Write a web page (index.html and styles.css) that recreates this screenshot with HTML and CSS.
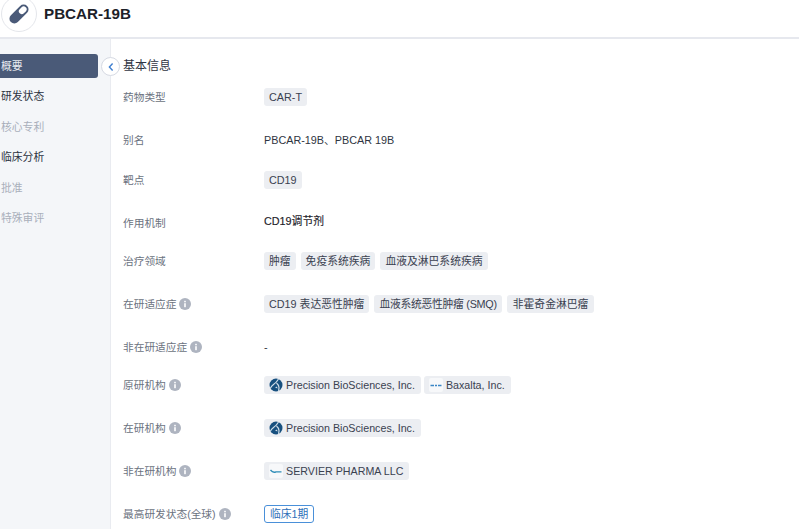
FILE: index.html
```html
<!DOCTYPE html>
<html lang="zh">
<head>
<meta charset="utf-8">
<title>PBCAR-19B</title>
<link rel="stylesheet" href="styles.css">
</head>
<body>
<svg class="defs" width="0" height="0" aria-hidden="true">
  <symbol id="info" viewBox="0 0 12 12">
    <circle cx="6" cy="6" r="6" fill="#aeb4c0"/>
    <rect x="5.2" y="5.2" width="1.6" height="4" fill="#fff"/>
    <rect x="5.2" y="2.8" width="1.6" height="1.5" fill="#fff"/>
  </symbol>
  <symbol id="prec" viewBox="0 0 14 14">
    <circle cx="7" cy="7" r="6.5" fill="#17507f"/>
    <path d="M9.5 1 Q7.5 4.5 4.5 6.5 Q2.5 8 1.5 10 M7.5 5 Q9.5 6.5 10 9.5 Q10 11 9.5 13" stroke="#cfdde8" stroke-width="1.2" fill="none"/>
    <path d="M6 9.5 L8 8.5 L8.5 10.5 Z" fill="#cfdde8"/>
  </symbol>
</svg>
<header class="topbar">
  <div class="logo">
    <svg width="24" height="24" viewBox="0 0 22 22">
      <g transform="rotate(45 11 11)">
        <rect x="6.5" y="0.5" width="9" height="21" rx="4.5" fill="#4a5a78"/>
        <rect x="8.3" y="2.3" width="5.4" height="7.7" rx="2.6" fill="#fff"/>
      </g>
    </svg>
  </div>
  <h1 class="title">PBCAR-19B</h1>
</header>
<div class="main">
  <nav class="side">
    <a class="nav active">概要</a>
    <a class="nav dark">研发状态</a>
    <a class="nav muted">核心专利</a>
    <a class="nav dark">临床分析</a>
    <a class="nav muted">批准</a>
    <a class="nav muted">特殊审评</a>
    <span class="collapse">
      <svg width="8" height="10" viewBox="0 0 8 10"><path d="M5.6 1.5 L2.4 5 L5.6 8.5" fill="none" stroke="#3f7fd0" stroke-width="1.4"/></svg>
    </span>
  </nav>
  <section class="content">
    <h2 class="heading">基本信息</h2>
    <div class="row h43"><span class="label">药物类型</span><div class="val"><span class="tag">CAR-T</span></div></div>
    <div class="row h40"><span class="label">别名</span><div class="val">PBCAR-19B、PBCAR 19B</div></div>
    <div class="row h43"><span class="label">靶点</span><div class="val"><span class="tag">CD19</span></div></div>
    <div class="row h38"><span class="label">作用机制</span><div class="val strong">CD19调节剂</div></div>
    <div class="row h43"><span class="label">治疗领域</span><div class="val"><span class="tag">肿瘤</span><span class="tag">免疫系统疾病</span><span class="tag">血液及淋巴系统疾病</span></div></div>
    <div class="row h43"><span class="label">在研适应症<svg class="info"><use href="#info"/></svg></span><div class="val"><span class="tag">CD19 表达恶性肿瘤</span><span class="tag tight">血液系统恶性肿瘤 (SMQ)</span><span class="tag wide">非霍奇金淋巴瘤</span></div></div>
    <div class="row h38"><span class="label">非在研适应症<svg class="info"><use href="#info"/></svg></span><div class="val">-</div></div>
    <div class="row h43"><span class="label">原研机构<svg class="info"><use href="#info"/></svg></span><div class="val orgs"><span class="tag org"><svg class="orgicon"><use href="#prec"/></svg>Precision BioSciences, Inc.</span><span class="tag org"><svg class="orgicon" viewBox="0 0 14 14"><rect width="14" height="14" rx="2" fill="#f7f8fa"/><path d="M1.5 7.5 H5 M6 7.5 H8 M9 7.5 H12.5" stroke="#3b86c6" stroke-width="1.3"/></svg>Baxalta, Inc.</span></div></div>
    <div class="row h43"><span class="label">在研机构<svg class="info"><use href="#info"/></svg></span><div class="val orgs"><span class="tag org"><svg class="orgicon"><use href="#prec"/></svg>Precision BioSciences, Inc.</span></div></div>
    <div class="row h43"><span class="label">非在研机构<svg class="info"><use href="#info"/></svg></span><div class="val orgs"><span class="tag org"><svg class="orgicon" viewBox="0 0 14 14"><rect width="14" height="14" rx="2" fill="#f7f8fa"/><path d="M1.5 6 Q4 9.2 7 7.8 L12.5 7.8" stroke="#2f8db8" stroke-width="1.3" fill="none"/></svg>SERVIER PHARMA LLC</span></div></div>
    <div class="row"><span class="label">最高研发状态(全球)<svg class="info"><use href="#info"/></svg></span><div class="val"><span class="status">临床1期</span></div></div>
  </section>
</div>
</body>
</html>
```
FILE: styles.css
```css
* { box-sizing: border-box; }
html, body { margin: 0; height: 100%; overflow: hidden; }
body {
  font-family: "Liberation Sans", "Noto Sans CJK SC", sans-serif;
  font-size: 10.8px;
  color: #2f3542;
  background: #fff;
  display: flex;
  flex-direction: column;
}
.defs { display: block; height: 0; }
.topbar {
  flex: none;
  height: 39px;
  display: flex;
  align-items: flex-start;
  border-bottom: 2px solid #e6e8ee;
  overflow: hidden;
}
.logo {
  width: 36px;
  height: 36px;
  margin: -4px 0 0 1px;
  border: 1px solid #e4e6eb;
  border-radius: 50%;
  display: flex;
  align-items: center;
  justify-content: center;
  flex: none;
}
.title {
  margin: 4px 0 0 7px;
  font-size: 15.2px;
  line-height: 20px;
  font-weight: 700;
  color: #1d2129;
}
.main { flex: 1; display: flex; min-height: 0; }
.side {
  position: relative;
  flex: none;
  width: 111px;
  background: #f4f6f9;
  border-right: 1px solid #e9ebf0;
  padding-top: 15px;
  display: flex;
  flex-direction: column;
}
.nav {
  height: 24px;
  width: 98px;
  margin-bottom: 6.4px;
  padding-left: 1px;
  line-height: 24px;
  white-space: nowrap;
}
.active {
  background: #4a5a78;
  color: #e8ebf0;
  border-radius: 0 3px 3px 0;
}
.dark { color: #2b3240; }
.muted { color: #a9afbb; }
.collapse {
  position: absolute;
  left: 101px;
  top: 18px;
  width: 19px;
  height: 19px;
  border-radius: 50%;
  border: 1px solid #d6dae3;
  background: #fff;
  display: flex;
  align-items: center;
  justify-content: center;
}
.content { flex: 1; padding: 18px 0 0 12px; min-width: 0; }
.heading {
  margin: 0 0 13px;
  font-size: 12px;
  line-height: 18px;
  font-weight: 400;
  color: #2f3542;
}
.row { display: flex; align-items: flex-start; }
.h43 { height: 43px; }
.h40 { height: 40px; }
.h38 { height: 38px; }
.label {
  width: 141px;
  flex: none;
  line-height: 18px;
  font-size: 10.7px;
  color: #6b7280;
  display: flex;
  align-items: center;
  white-space: nowrap;
}
.val {
  display: flex;
  gap: 5px;
  line-height: 18px;
  color: #2f3542;
  white-space: nowrap;
}
.orgs { gap: 3px; font-size: 10.7px; }
.strong { margin-top: -2px; color: #1d2129; -webkit-text-stroke: 0.15px #1d2129; }
.tag {
  height: 18px;
  line-height: 18px;
  padding: 0 5px;
  background: #eceef2;
  border-radius: 3px;
  color: #3a4150;
  display: inline-flex;
  align-items: center;
}
.tight { letter-spacing: -0.27px; }
.wide { padding: 0 6px; }
.info { width: 12px; height: 12px; margin-left: 3px; flex: none; }
.orgicon { width: 14px; height: 14px; margin-right: 3px; flex: none; }
.org { padding: 0 6px 0 5px; }
.status {
  height: 18px;
  line-height: 16px;
  padding: 0 5px;
  border: 1px solid #4a90d9;
  border-radius: 3px;
  color: #2f6fb8;
  background: #fff;
}
```
